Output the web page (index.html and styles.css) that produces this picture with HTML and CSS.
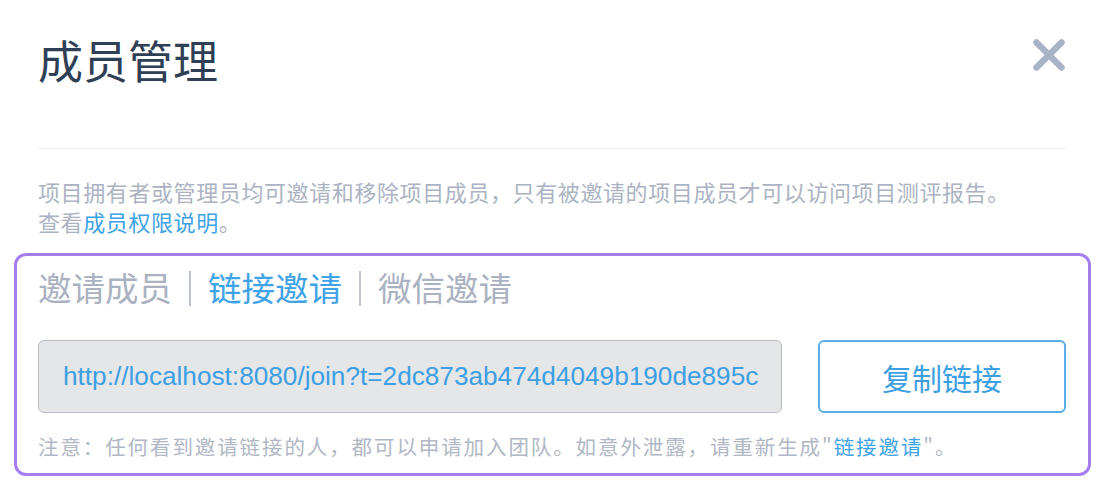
FILE: index.html
```html
<!DOCTYPE html>
<html lang="zh-CN">
<head>
<meta charset="utf-8">
<title>成员管理</title>
<link rel="stylesheet" href="styles.css">
</head>
<body>
<div class="dialog">
  <header class="dialog-header">
    <h1 class="dialog-title">成员管理</h1>
    <button class="close-btn" type="button" aria-label="关闭">
      <svg width="34" height="34" viewBox="0 0 34 34" aria-hidden="true">
        <path d="M4.5 4.5 L29.5 29.5 M29.5 4.5 L4.5 29.5" stroke="currentColor" stroke-width="6.5" stroke-linecap="round" fill="none"/>
      </svg>
    </button>
  </header>
  <div class="divider"></div>
  <p class="desc">项目拥有者或管理员均可邀请和移除项目成员，只有被邀请的项目成员才可以访问项目测评报告。<br>查看<a class="link" href="#">成员权限说明</a>。</p>

  <section class="invite-box">
    <nav class="tabs">
      <span class="tab">邀请成员</span>
      <span class="sep"></span>
      <span class="tab active">链接邀请</span>
      <span class="sep"></span>
      <span class="tab">微信邀请</span>
    </nav>
    <div class="link-row">
      <input class="link-input" type="text" readonly value="http://localhost:8080/join?t=2dc873ab474d4049b190de895c7a1e">
      <button class="copy-btn" type="button">复制链接</button>
    </div>
    <p class="note">注意：任何看到邀请链接的人，都可以申请加入团队。如意外泄露，请重新生成"<span class="link">链接邀请</span>"。</p>
  </section>
</div>
</body>
</html>
```

FILE: styles.css
```css
* { box-sizing: border-box; }

html, body {
  margin: 0;
  padding: 0;
  background: #ffffff;
}

body {
  font-family: "Noto Sans CJK SC", "Noto Sans", sans-serif;
  color: #a9b1c1;
}

.dialog {
  padding: 0 45px 0 38px;
}

.dialog-header {
  display: flex;
  justify-content: space-between;
  align-items: flex-start;
  padding-top: 37px;
  margin-bottom: 66px;
}

.dialog-title {
  margin: 0;
  font-size: 45px;
  line-height: 45px;
  font-weight: 400;
  color: #2f3f56;
}

.close-btn {
  margin: 1px 0 0 0;
  padding: 0;
  border: 0;
  background: none;
  width: 34px;
  height: 34px;
  color: #a9b3c7;
  cursor: pointer;
}

.close-btn svg { display: block; }

.divider {
  height: 1px;
  background: #eef0f3;
}

.desc {
  margin: 27px 0 0;
  font-size: 22px;
  line-height: 30px;
  letter-spacing: 0.6px;
  color: #abb3c2;
}

.link {
  color: #3ea2e6;
  text-decoration: none;
}

.invite-box {
  margin: 17px -25px 0 -24px;
  padding: 11px 22px 13px 21px;
  border: 3px solid #a47ef2;
  border-radius: 12px;
}

.tabs {
  display: flex;
  align-items: center;
  height: 40px;
}

.tab {
  font-size: 33.5px;
  line-height: 40px;
  color: #aab2c1;
}

.tab.active {
  color: #3fa3e8;
}

.sep {
  width: 2px;
  height: 35px;
  margin: 2px 17px 0 17px;
  background: #bcc3cf;
}

.link-row {
  display: flex;
  gap: 36px;
  margin-top: 33px;
  height: 73px;
}

.link-input {
  flex: 1;
  min-width: 0;
  height: 73px;
  margin: 0;
  padding: 0 22px 0 24px;
  border: 1px solid #b9bcc6;
  border-radius: 6px;
  background: #e5e6e8;
  font-family: "Liberation Sans", Arial, sans-serif;
  font-size: 26.2px;
  color: #3d9fe3;
  outline: none;
}

.copy-btn {
  width: 248px;
  height: 73px;
  margin: 0;
  padding: 0;
  border: 2px solid #5aade6;
  border-radius: 6px;
  background: #ffffff;
  font-family: "Noto Sans CJK SC", "Noto Sans", sans-serif;
  font-size: 30px;
  color: #3d9fe3;
  cursor: pointer;
}

.note {
  margin: 19px 0 0;
  font-size: 20.5px;
  line-height: 28px;
  letter-spacing: 1.9px;
  color: #b0b7c5;
  white-space: nowrap;
}
```
